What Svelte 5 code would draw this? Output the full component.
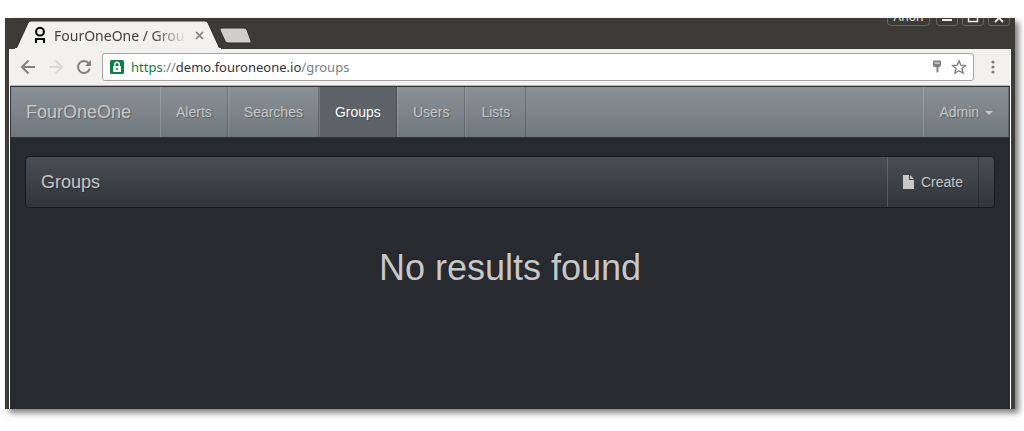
<script>
  const links = ['Alerts', 'Searches', 'Groups', 'Users', 'Lists'];
  const current = 'Groups';
</script>

<div class="window">
  <header class="titlebar">
    <div class="tab">
      <svg class="tabshape" viewBox="0 0 208 28" preserveAspectRatio="none" aria-hidden="true">
        <path d="M0 28Q1 28 2 26L13 2Q14 0 16 0H190Q192 0 193 2L205 28Z" fill="#f2f1f0" stroke="#2d2c28" />
        <path d="M0 27.500H206" stroke="#f2f1f0" />
      </svg>
      <svg class="favicon" width="12" height="16" viewBox="0 0 12 16" aria-hidden="true">
        <circle cx="6" cy="4.700" r="3.900" fill="none" stroke="#000" stroke-width="2" />
        <path d="M2 16V12H10V16" fill="none" stroke="#000" stroke-width="2" />
      </svg>
      <span class="tabtitle">FourOneOne / Grou</span>
      <button class="close" aria-label="Close tab">
        <svg width="9" height="9" viewBox="0 0 9 9"><path d="M1 1l7 7M8 1l-7 7" stroke="#808080" stroke-width="1.700" /></svg>
      </button>
    </div>
    <button class="newtab" aria-label="New tab">
      <svg width="34" height="17" viewBox="0 0 34 17"><path d="M3 1H25Q27 1 28 3L32 14Q33 16 31 16H9Q7 16 6 14L1 3Q0 1 3 1Z" fill="#cfcecd" stroke="#2d2c28" /></svg>
    </button>
    <div class="controls">
      <button class="anon">Anon</button>
      <button aria-label="Minimize"><svg width="22" height="16" viewBox="0 0 22 16"><path d="M6 10H16" stroke="#eee" stroke-width="2" /></svg></button>
      <button aria-label="Maximize"><svg width="22" height="16" viewBox="0 0 22 16"><path d="M6.500 3V11.500H15.500V3" fill="none" stroke="#eee" stroke-width="1.400" /></svg></button>
      <button aria-label="Close"><svg width="22" height="16" viewBox="0 0 22 16"><path d="M7 4L15 12M15 4L7 12" stroke="#eee" stroke-width="1.800" /></svg></button>
    </div>
  </header>

  <div class="inner">
    <div class="toolbar">
      <button aria-label="Back"><svg width="16" height="16" viewBox="0 0 16 16"><path d="M15 8H2M8.500 1.500L2 8l6.500 6.500" fill="none" stroke="#808080" stroke-width="2" /></svg></button>
      <button aria-label="Forward" disabled><svg width="16" height="16" viewBox="0 0 16 16"><path d="M1 8H14M7.500 1.500L14 8l-6.500 6.500" fill="none" stroke="#dad9d8" stroke-width="2" /></svg></button>
      <button aria-label="Reload"><svg width="16" height="16" viewBox="0 0 16 16"><path d="M12.700 4.200A6 6 0 1 0 13.800 9.500" fill="none" stroke="#808080" stroke-width="2" /><path d="M15 1V7H9Z" fill="#808080" /></svg></button>
      <div class="address">
        <svg width="14" height="14" viewBox="0 0 14 14" aria-hidden="true">
          <rect width="14" height="14" rx="1.500" fill="#0b8043" />
          <rect x="3" y="6" width="8" height="6" rx=".5" fill="#fff" />
          <path d="M4.800 6V4.500a2.200 2.200 0 0 1 4.400 0V6" fill="none" stroke="#fff" stroke-width="1.400" />
          <circle cx="7" cy="9" r="1" fill="#0b8043" />
        </svg>
        <span class="url"><span class="secure">https</span><span class="dim">://</span>demo.fouroneone.io<span class="dim">/groups</span></span>
        <button aria-label="Saved passwords"><svg width="14" height="14" viewBox="0 0 14 14"><path d="M3 1.500Q3 .5 4 .5H10Q11 .5 11 1.500V5Q11 7 9 7H8.500V12L6.500 12.800V7H5Q3 7 3 5Z" fill="#808080" /><path d="M4.500 3H9.500" stroke="#fff" stroke-width="1" /></svg></button>
        <button aria-label="Bookmark this page"><svg width="16" height="16" viewBox="0 0 16 16"><path d="M8 1.800L9.800 6.100L14.500 6.500L11 9.600L12 14.100L8 11.700L4 14.100L5 9.600L1.500 6.500L6.200 6.100Z" fill="none" stroke="#808080" stroke-width="1.400" /></svg></button>
      </div>
      <button class="more" aria-label="Browser menu"><svg width="4" height="14" viewBox="0 0 4 14"><g fill="#808080"><circle cx="2" cy="2" r="1.600" /><circle cx="2" cy="7" r="1.600" /><circle cx="2" cy="12" r="1.600" /></g></svg></button>
    </div>

    <div class="page">
      <nav class="navbar">
        <a class="brand" href="#home">FourOneOne</a>
        <div class="links">
          {#each links as link}
            <a class="item" class:active={link === current} href={'#' + link.toLowerCase()}>{link}</a>
          {/each}
        </div>
        <button class="item admin">Admin <span class="caret"></span></button>
      </nav>
      <main>
        <section class="panel">
          <h1>Groups</h1>
          <button class="item create">
            <svg width="12" height="14" viewBox="0 0 12 14" aria-hidden="true"><path d="M0 0H6V5H11V14H0Z M7 0L11 4H7Z" fill="currentColor" /></svg>
            Create
          </button>
        </section>
        <h2>No results found</h2>
      </main>
    </div>
  </div>
</div>

<style>
  :global(html), :global(body) { height: 100%; }
  :global(body) { margin: 0; background: #fff; }
  :global(#app) { height: 100%; padding: 18px 9px 22px 5px; box-sizing: border-box; }
  * { box-sizing: border-box; }
  button { border: 0; padding: 0; margin: 0; background: none; font: inherit; color: inherit; }
  svg { display: block; flex: none; }
  a { text-decoration: none; }

  .window {
    display: flex;
    flex-direction: column;
    height: 100%;
    background: #3c3b37;
    box-shadow: 4px 4px 6px rgba(0, 0, 0, 0.5);
    font-family: "Noto Sans", sans-serif;
  }
  .titlebar {
    display: flex;
    align-items: flex-start;
    height: 31px;
    padding: 0 5px 0 10px;
    overflow: hidden;
    flex: none;
  }
  .tab {
    position: relative;
    display: flex;
    align-items: center;
    width: 208px;
    height: 28px;
    margin-top: 3px;
    padding: 0 19px;
    color: #3f3f3f;
    font-size: 14px;
  }
  .tabshape { position: absolute; inset: 0; width: 100%; height: 100%; }
  .favicon, .tabtitle, .close { position: relative; }
  .tabtitle {
    flex: 1;
    min-width: 0;
    margin-left: 8px;
    white-space: nowrap;
    mask-image: linear-gradient(to right, #000 75%, transparent);
  }
  .close { padding: 0 0 0 8px; }
  .newtab { margin: 9px 0 0 -4px; }
  .controls { display: flex; gap: 4px; margin: -8px 0 0 auto; color: #eee; }
  .controls button {
    height: 16px;
    width: 22px;
    border: 1px solid #686760;
    border-radius: 3px;
    display: flex;
    align-items: center;
    justify-content: center;
  }
  .controls .anon { width: 43px; margin-right: 2px; padding-bottom: 4px; font-size: 12px; border-radius: 4px; }

  .inner {
    flex: 1;
    min-height: 0;
    display: flex;
    flex-direction: column;
    margin: 0 4px;
    border: solid #fff;
    border-width: 0 1px;
  }
  .toolbar {
    display: flex;
    align-items: center;
    gap: 12px;
    height: 37px;
    padding: 0 15px 0 10px;
    background: #f2f1f0;
    border-bottom: 1px solid #b4b4b2;
    flex: none;
  }
  .address {
    display: flex;
    align-items: center;
    gap: 7px;
    flex: 1;
    height: 28px;
    margin-left: -2px;
    padding: 0 6px 0 7px;
    border: 1px solid #a5a4a2;
    border-radius: 3px;
    background: #fff;
    font-size: 13px;
    color: #333;
  }
  .url { flex: 1; white-space: nowrap; }
  .secure { color: #0b8043; }
  .dim { color: #808080; }
  .more { margin-left: 5px; }

  .page {
    flex: 1;
    min-height: 0;
    background: #272b30;
    color: #c8c8c8;
    font-family: "Liberation Sans", Arial, sans-serif;
    font-size: 14px;
    line-height: 20px;
  }
  .navbar {
    display: flex;
    height: 52px;
    border: 1px solid #2f3539;
    background: linear-gradient(#8a9196, #7a8288 60%, #70787d);
    text-shadow: 1px 1px 1px rgba(0, 0, 0, 0.3);
  }
  .brand { width: 149px; padding: 15px; font-size: 18px; color: #c8c8c8; }
  .links { display: flex; flex: 1; }
  .item {
    display: block;
    padding: 15px;
    border: 1px solid rgba(0, 0, 0, 0.2);
    border-width: 0 1px;
    border-left-color: rgba(255, 255, 255, 0.15);
    color: #c8c8c8;
    white-space: nowrap;
    text-shadow: 1px 1px 1px rgba(0, 0, 0, 0.3);
  }
  .active { background: #5d6268; color: #fff; }
  .caret {
    display: inline-block;
    margin-left: 2px;
    border: 4px solid transparent;
    border-top-color: currentColor;
    border-bottom: 0;
    vertical-align: middle;
  }
  main { padding: 18px 15px 0; }
  .panel {
    display: flex;
    justify-content: space-between;
    height: 52px;
    padding: 0 15px;
    border: 1px solid #17191c;
    border-radius: 4px;
    background: linear-gradient(#484e55, #3a3f44 60%, #313539);
    text-shadow: 1px 1px 1px rgba(0, 0, 0, 0.3);
  }
  h1 { margin: 15px 0; font-size: 18px; font-weight: 400; line-height: 20px; }
  .create { display: flex; align-items: center; gap: 6px; }
  h2 {
    margin: 40px 0 10px;
    font-size: 36px;
    font-weight: 400;
    line-height: 40px;
    text-align: center;
    text-shadow: -1px -1px 0 rgba(0, 0, 0, 0.3);
  }
</style>
